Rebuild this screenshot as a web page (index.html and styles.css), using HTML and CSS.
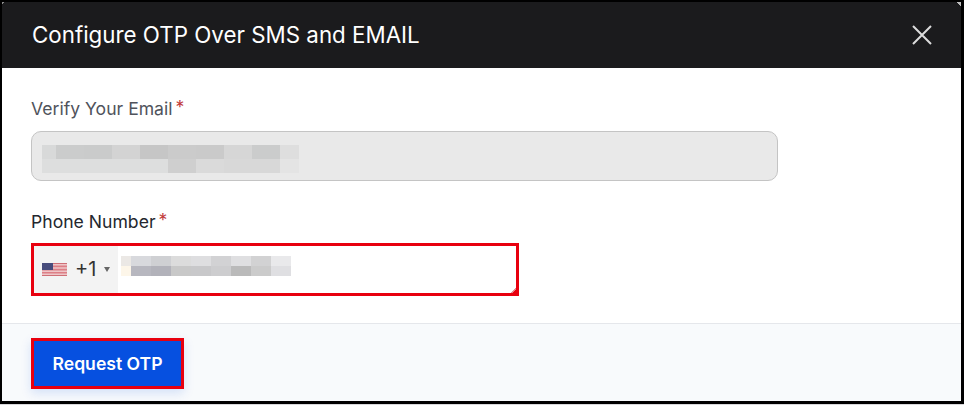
FILE: index.html
```html
<!DOCTYPE html>
<html lang="en">
<head>
<meta charset="utf-8">
<title>Configure OTP Over SMS and EMAIL</title>
<link rel="stylesheet" href="styles.css">
</head>
<body>
<div class="frame">
  <section class="dialog">
    <header class="head">
      <h1 class="title">Configure OTP Over SMS and EMAIL</h1>
      <button class="close" aria-label="Close">
        <svg width="22" height="22" viewBox="0 0 22 22"><path d="M2 2 20 20M20 2 2 20" stroke="#dcdcdc" stroke-width="2" fill="none"/></svg>
      </button>
    </header>
    <div class="body">
      <label class="label label-muted">Verify Your Email<span class="req">*</span></label>
      <div class="email-field"><div class="blur-email"></div></div>
      <label class="label label-dark">Phone Number<span class="req">*</span></label>
      <div class="phone-field">
        <div class="dial">
          <svg class="flag" width="25" height="13" viewBox="0 0 25 13">
            <rect width="25" height="13" fill="#dd7f86"/>
            <path d="M0 1h25v1.6H0zM0 4.2h25v1.6H0zM0 7.4h25v1.6H0zM0 10.6h25v1.6H0z" fill="#eec6c8"/>
            <rect width="25" height="1" fill="#cf6f76"/>
            <rect y="12" width="25" height="1" fill="#cf6f76"/>
            <rect width="11" height="7" fill="#474c7c"/>
          </svg>
          <span class="code">+1</span>
          <span class="caret"></span>
        </div>
        <div class="blur-phone"></div>
        <span class="grip"></span>
      </div>
    </div>
    <footer class="foot">
      <button class="request">Request OTP</button>
    </footer>
  </section>
</div>
</body>
</html>
```
FILE: styles.css
```css
* { box-sizing: border-box; }
html, body { margin: 0; padding: 0; }
body {
  width: 964px;
  height: 405px;
  overflow: hidden;
  background: #d9d9dc;
  font-family: Inter, "Liberation Sans", sans-serif;
}
.frame {
  width: 964px;
  height: 403.5px;
  border: solid #000;
  border-width: 2px 3px 3px 2px;
  position: relative;
}
.frame::before, .frame::after {
  content: "";
  position: absolute;
  top: 0;
  z-index: 2;
}
.frame::before {
  left: 0;
  width: 3px;
  height: 3px;
  background: linear-gradient(135deg, #8a8a8a 50%, transparent 50%);
}
.frame::after {
  right: 0;
  width: 4px;
  height: 5px;
  background: linear-gradient(225deg, #bdbdbd 50%, transparent 50%);
}
.dialog {
  height: 100%;
  display: flex;
  flex-direction: column;
  background: #fff;
}
.head {
  height: 66px;
  flex: none;
  display: flex;
  align-items: center;
  justify-content: space-between;
  padding: 0 28px 0 30px;
  background: #1b1b1d;
}
.title {
  margin: 0;
  font-size: 22.35px;
  font-weight: 400;
  line-height: 1;
  color: #fff;
}
.close {
  display: flex;
  padding: 0;
  border: 0;
  background: none;
}
.body {
  flex: 1;
  padding: 31px 0 0 29px;
}
.label {
  display: block;
  font-size: 17.6px;
  font-weight: 400;
  line-height: 20px;
}
.label-muted { color: #50535c; }
.label-dark { color: #24272e; margin-top: 31px; }
.req {
  margin-left: 3px;
  color: #c23b3b;
  position: relative;
  top: -2px;
}
.email-field {
  width: 747px;
  height: 50px;
  margin-top: 12px;
  padding: 13px 0 0 10px;
  border: 1px solid #c4c4c4;
  border-radius: 10px;
  background: #e9e9e9;
}
.blur-email {
  width: 257px;
  height: 28px;
  background:
    linear-gradient(90deg,
      #d8d9d9 0 14px, #cbcccc 14px 42px, #cacbcb 42px 70px, #d3d3d3 70px 98px,
      #c6c6c6 98px 126px, #cbcbcb 126px 154px, #cacaca 154px 182px, #d6d6d6 182px 210px,
      #cbcccc 210px 238px, #dedede 238px) top / 100% 14px no-repeat,
    linear-gradient(90deg,
      #dddede 0 126px, #cfcfcf 126px 154px, #dadada 154px 182px,
      #d8d8d8 182px 238px, #e4e4e4 238px) bottom / 100% 14px no-repeat;
}
.phone-field {
  width: 488px;
  height: 53px;
  margin-top: 11px;
  display: flex;
  position: relative;
  border: 3px solid #e8000f;
  background: #fff;
}
.dial {
  width: 84px;
  display: flex;
  align-items: center;
  padding: 0 0 1px 8px;
  background: #f3f3f3;
}
.flag { flex: none; }
.code {
  margin-left: 8px;
  font-size: 20px;
  color: #333;
}
.caret {
  margin-left: 8px;
  border: solid transparent;
  border-width: 5px 3.5px 0;
  border-top-color: #666;
}
.blur-phone {
  width: 170px;
  height: 20px;
  margin: 10px 0 0 3px;
  background:
    linear-gradient(90deg,
      #ebe8e5 0 10px, #d8d9dd 10px 30px, #cfd0d3 30px 50px, #dcdcdc 50px 70px,
      #dedee0 70px 90px, #d2d2d4 90px 110px, #dfdfe1 110px 130px, #d2d2d3 130px 150px,
      #e9e9eb 150px) top / 100% 10px no-repeat,
    linear-gradient(90deg,
      #fdf6e9 0 10px, #b7b7bf 10px 30px, #b2b2ba 30px 50px, #c8c8c8 50px 70px,
      #c8c8ca 70px 90px, #cdcdcf 90px 110px, #bababa 110px 130px, #cbcbcb 130px 150px,
      #dfdfe2 150px) bottom / 100% 10px no-repeat;
}
.grip {
  position: absolute;
  right: 0;
  bottom: 0;
  width: 5px;
  height: 5px;
  background: linear-gradient(135deg, transparent 50%, #e58a8f 50% 70%, #e8000f 70%);
}
.foot {
  height: 78px;
  flex: none;
  padding-top: 14px;
  border-top: 1px solid #e5e7eb;
  background: #f8fafc;
  padding-left: 29px;
}
.request {
  display: block;
  width: 153px;
  height: 51px;
  padding: 1px 0 0;
  border: 3px solid #e8000f;
  background: #0650e0;
  box-shadow: 0 4px 10px rgba(6, 80, 224, .15);
  color: #fff;
  font: 600 17.6px Inter, "Liberation Sans", sans-serif;
}
```
